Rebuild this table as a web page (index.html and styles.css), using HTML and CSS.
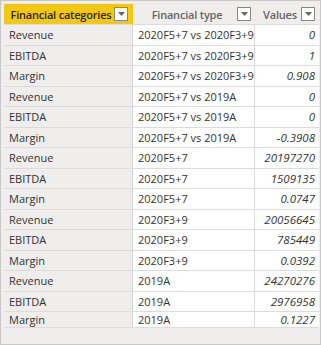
FILE: index.html
```html
<!DOCTYPE html>
<html>
<head>
<meta charset="utf-8">
<link rel="stylesheet" href="styles.css">
</head>
<body>
<div class="frame">
  <div class="grid">
    <div class="hd hd-active"><span class="hd-text">Financial categories</span><span class="dd"><svg width="7" height="4" viewBox="0 0 7 4"><path d="M0 0h7L3.5 4z" fill="#666"/></svg></span></div>
    <div class="hd"><span class="hd-text">Financial type</span><span class="dd"><svg width="7" height="4" viewBox="0 0 7 4"><path d="M0 0h7L3.5 4z" fill="#666"/></svg></span></div>
    <div class="hd"><span class="hd-text">Values</span><span class="dd"><svg width="7" height="4" viewBox="0 0 7 4"><path d="M0 0h7L3.5 4z" fill="#666"/></svg></span></div>

    <div class="c c1">Revenue</div><div class="c c2">2020F5+7 vs 2020F3+9</div><div class="c c3">0</div>
    <div class="c c1">EBITDA</div><div class="c c2">2020F5+7 vs 2020F3+9</div><div class="c c3">1</div>
    <div class="c c1">Margin</div><div class="c c2">2020F5+7 vs 2020F3+9</div><div class="c c3">0.908</div>
    <div class="c c1">Revenue</div><div class="c c2">2020F5+7 vs 2019A</div><div class="c c3">0</div>
    <div class="c c1">EBITDA</div><div class="c c2">2020F5+7 vs 2019A</div><div class="c c3">0</div>
    <div class="c c1">Margin</div><div class="c c2">2020F5+7 vs 2019A</div><div class="c c3">-0.3908</div>
    <div class="c c1">Revenue</div><div class="c c2">2020F5+7</div><div class="c c3">20197270</div>
    <div class="c c1">EBITDA</div><div class="c c2">2020F5+7</div><div class="c c3">1509135</div>
    <div class="c c1">Margin</div><div class="c c2">2020F5+7</div><div class="c c3">0.0747</div>
    <div class="c c1">Revenue</div><div class="c c2">2020F3+9</div><div class="c c3">20056645</div>
    <div class="c c1">EBITDA</div><div class="c c2">2020F3+9</div><div class="c c3">785449</div>
    <div class="c c1">Margin</div><div class="c c2">2020F3+9</div><div class="c c3">0.0392</div>
    <div class="c c1">Revenue</div><div class="c c2">2019A</div><div class="c c3">24270276</div>
    <div class="c c1">EBITDA</div><div class="c c2">2019A</div><div class="c c3">2976958</div>
    <div class="c c1">Margin</div><div class="c c2">2019A</div><div class="c c3">0.1227</div>
  </div>
</div>
</body>
</html>
```
FILE: styles.css
```css
html, body {
  margin: 0;
  padding: 0;
  background: #f0f0f0;
}
.frame {
  width: 321px;
  height: 345px;
  box-sizing: border-box;
  border: 1px solid #c8c8c8;
  background: #efeeed;
  padding: 3px 2px 0 3px;
  font-family: "Open Sans", "Noto Sans", sans-serif;
  font-size: 11px;
  color: #333333;
}
.grid {
  display: grid;
  grid-template-columns: 129px 122px 64px;
  grid-template-rows: 20px repeat(14, 20.5px);
  border-bottom: 1px solid #dcdcdc;
}
.hd {
  display: flex;
  align-items: center;
  padding: 0 4px 0 4px;
  font-weight: 600;
  font-size: 11px;
  letter-spacing: -0.2px;
  color: #666666;
  background: #efeeed;
  white-space: nowrap;
}
.hd-text {
  flex: 1;
  text-align: center;
}
.hd-active {
  background: #f2c811;
  color: #252423;
  padding-right: 5px;
}
.dd {
  width: 14px;
  height: 14px;
  box-sizing: border-box;
  border: 1px solid #8a8886;
  background: #fff;
  display: flex;
  align-items: center;
  justify-content: center;
  flex: none;
}
.c {
  display: flex;
  align-items: center;
  padding: 0 5px;
  border-top: 1px solid #dcdcdc;
  box-sizing: border-box;
  white-space: nowrap;
  overflow: hidden;
}
.c1 {
  background: #efeeed;
  border-right: 1px solid #d6d6d6;
}
.c2 {
  background: #fff;
  border-right: 1px solid #dcdcdc;
}
.c3 {
  background: #fff;
  justify-content: flex-end;
  font-style: italic;
  font-size: 11.5px;
  padding-right: 4px;
}
```
